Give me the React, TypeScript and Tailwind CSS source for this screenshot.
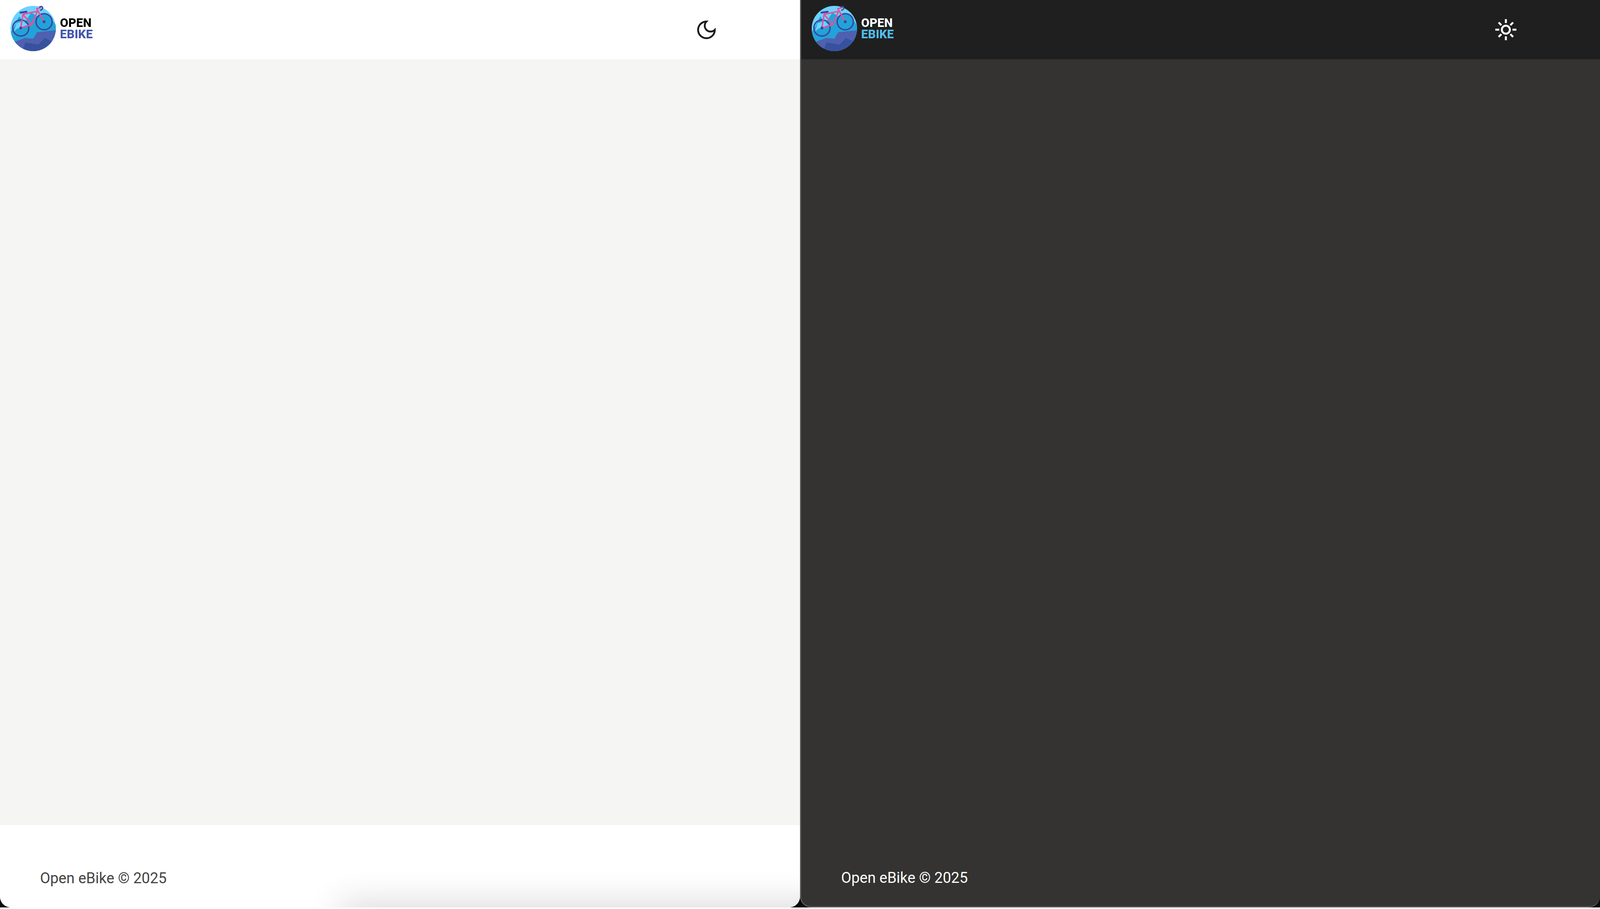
import React from "react";

function Logo() {
  // coordinates traced from the artwork at 3x
  return (
    <svg viewBox="88 42 354 358" className="w-[116px] h-[118px] shrink-0 mb-[6px] blur-[0.5px]">
      <defs>
        <clipPath id="disc">
          <circle cx="265" cy="221" r="177" />
        </clipPath>
      </defs>
      <g clipPath="url(#disc)">
        <rect x="88" y="42" width="354" height="358" fill="#6dd2fc" />
        <path
          d="M88 250 L125 190 L155 125 L195 180 L250 95 L300 130 L370 185 L410 150 L442 195 L442 400 L88 400Z"
          fill="#22a3d8"
        />
        <path d="M112 250 L135 178 L185 165 L222 192 L135 225Z" fill="#6dd2fc" />
        <path d="M290 95 H420 L410 150 L370 185 L300 130Z" fill="#6dd2fc" />
        <circle cx="350" cy="168" r="60" fill="#22a3d8" />
        <path d="M120 325 L200 295 L265 300 L295 250 L442 235 L442 400 L120 400Z" fill="#4f60b0" />
        <path d="M175 400 L205 330 L305 348 L355 295 L410 320 L442 305 L442 400Z" fill="#36529f" />
      </g>
      <g fill="none" stroke="#3a459f" strokeWidth="11">
        <circle cx="168" cy="217" r="63" />
        <circle cx="350" cy="168" r="63" />
      </g>
      <g fill="none" stroke="#e94f9b" strokeWidth="11" strokeLinejoin="round">
        <path d="M168 217 L185 110 L297 87 L255 190 L168 217" />
        <path d="M185 112 L255 190" />
        <path d="M350 168 L292 66 L325 58" />
      </g>
      <path d="M316 52 Q338 44 339 60 Q338 74 322 78" fill="none" stroke="#3a459f" strokeWidth="10" strokeLinecap="round" />
      <path d="M165 97 L212 90" fill="none" stroke="#3a459f" strokeWidth="15" strokeLinecap="round" />
      <circle cx="168" cy="217" r="11" fill="#3a459f" />
      <circle cx="350" cy="168" r="11" fill="#3a459f" />
    </svg>
  );
}

function MoonIcon() {
  return (
    <svg viewBox="0 0 24 24" className="w-[57px] h-[57px]" fill="none" stroke="#1c1c1c" strokeWidth="2" strokeLinejoin="miter">
      <path d="M12 3a6 6 0 0 0 9 9 9 9 0 1 1-9-9Z" />
    </svg>
  );
}

function SunIcon() {
  return (
    <svg viewBox="-30 -30 60 60" className="w-[60px] h-[60px]" fill="none" stroke="#ffffff" strokeWidth="5">
      <circle r="10.3" />
      <path d="M0 -27V-17M0 17V27M-27 0H-17M17 0H27M-18.5 -18.5L-11.5 -11.5M11.5 11.5L18.5 18.5M-18.5 18.5L-11.5 11.5M11.5 -11.5L18.5 -18.5" />
    </svg>
  );
}

function LightPanel() {
  return (
    <div className="relative flex flex-col w-1/2 overflow-hidden rounded-b-[28px] bg-white font-['Roboto',sans-serif]">
      <header className="flex items-center h-[152px] pl-[1.3%] pr-[10.3%] bg-white">
        <Logo />
        <div className="ml-[11px] mt-[-6px] flex flex-col font-extrabold text-[31px] leading-[29px] blur-[0.4px]">
          <span className="text-black">OPEN</span>
          <span className="text-[#4456ac]">EBIKE</span>
        </div>
        <div className="ml-auto">
          <MoonIcon />
        </div>
      </header>
      <main className="flex-1 bg-[#f5f5f3]" />
      <footer className="flex items-center h-[211px] pl-[5%] pt-[62px] text-[38px] bg-white text-[#444444]">
        Open eBike © 2025
      </footer>
      {/* soft shadow from the window behind */}
      <div className="absolute left-[44%] right-[-60px] top-[2345px] h-[40px] shadow-[0_0_90px_30px_rgba(0,0,0,0.16)]" />
    </div>
  );
}

function DarkPanel() {
  return (
    <div className="flex flex-col w-1/2 overflow-hidden rounded-b-[28px] border-l-[3px] border-b-[3px] border-[#5a5a5a] bg-[#343331] font-['Roboto',sans-serif]">
      <header className="flex items-center h-[152px] pl-[1.3%] pr-[10.3%] bg-[#1f1f1f]">
        <Logo />
        <div className="ml-[11px] mt-[-6px] flex flex-col font-extrabold text-[31px] leading-[29px] blur-[0.4px]">
          <span className="text-white">OPEN</span>
          <span className="text-[#4fbdec]">EBIKE</span>
        </div>
        <div className="ml-auto">
          <SunIcon />
        </div>
      </header>
      <main className="flex-1" />
      <footer className="flex items-center h-[208px] pl-[5%] pt-[62px] text-[38px] text-white">
        Open eBike © 2025
      </footer>
    </div>
  );
}

export default function App() {
  return (
    <div className="flex w-full h-[2324px] bg-[#07090b]">
      <LightPanel />
      <DarkPanel />
    </div>
  );
}
